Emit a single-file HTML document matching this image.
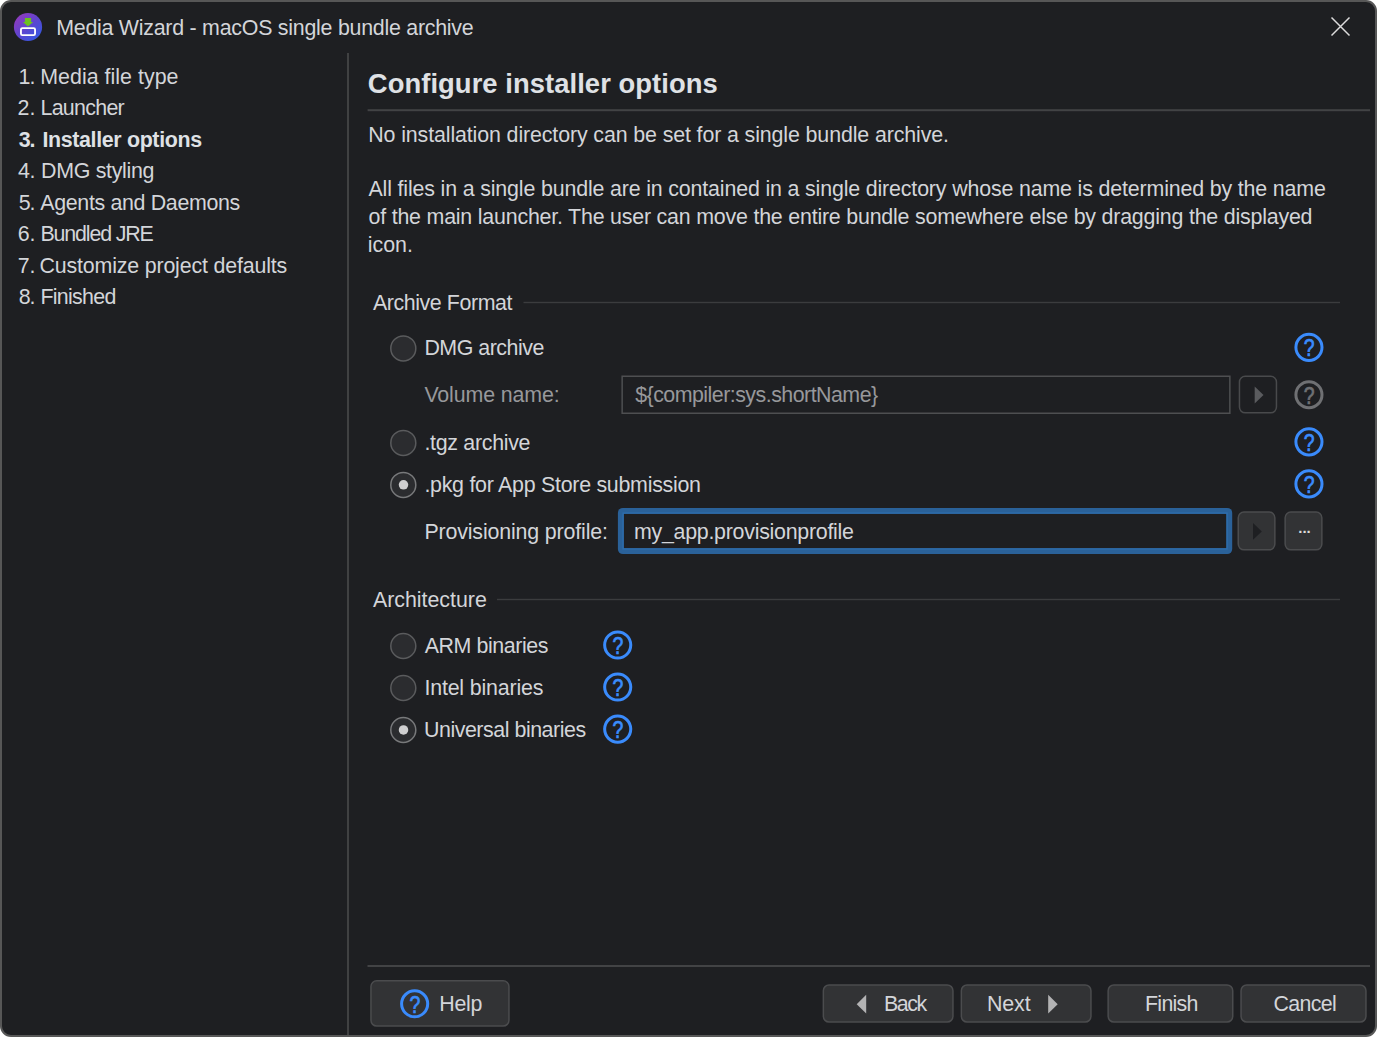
<!DOCTYPE html>
<html lang="en">
<head>
<meta charset="utf-8">
<title>Media Wizard - macOS single bundle archive</title>
<style>
*{box-sizing:border-box;margin:0;padding:0}
html,body{width:1377px;height:1037px;overflow:hidden;background:#fff}
body{font-family:"Liberation Sans",Arial,sans-serif;color:#dfe1e5;position:relative}
#win{position:absolute;left:0;top:0;width:1377px;height:1037px;background:#1e1f22;border:2px solid #575757;border-radius:11px;overflow:hidden}
#abs{position:absolute;left:0;top:0;width:1377px;height:1037px}
#shapes{position:absolute;left:0;top:0}
.q{font-family:"Liberation Sans",Arial,sans-serif;font-size:22.6px;font-weight:400;text-anchor:middle;stroke-width:.7px}
.dots{font-family:"Liberation Sans",Arial,sans-serif;font-size:15px;font-weight:700;text-anchor:middle}
.n{display:inline-block;white-space:pre}
.t{position:absolute;white-space:pre;line-height:28px;color:#d3d5d9;font-weight:400;display:block}
</style>
</head>
<body>
<div id="win"></div>
<div id="abs">
<svg id="shapes" width="1377" height="1037" viewBox="0 0 1377 1037">
<rect x="347" y="53" width="2" height="982" fill="#404142"/>
<rect x="367.6" y="109.2" width="1002.4" height="2" fill="#424345"/>
<rect x="367.5" y="965" width="1002.5" height="2" fill="#424345"/>
<rect x="523.5" y="301.8" width="816.5" height="1.4" fill="#3b3c3e"/>
<rect x="497" y="598.8" width="843" height="1.4" fill="#3b3c3e"/>
<circle cx="403.3" cy="348.4" r="12.5" fill="#2b2c2f" stroke="#5a5b5d" stroke-width="1.5"/>
<circle cx="403.3" cy="442.9" r="12.5" fill="#2b2c2f" stroke="#5a5b5d" stroke-width="1.5"/>
<circle cx="403.3" cy="484.9" r="12.5" fill="#2b2c2f" stroke="#78797b" stroke-width="1.5"/>
<circle cx="403.5" cy="484.8" r="4.75" fill="#cfcfd0"/>
<circle cx="403.3" cy="646" r="12.5" fill="#2b2c2f" stroke="#5a5b5d" stroke-width="1.5"/>
<circle cx="403.3" cy="688" r="12.5" fill="#2b2c2f" stroke="#5a5b5d" stroke-width="1.5"/>
<circle cx="403.3" cy="730" r="12.5" fill="#2b2c2f" stroke="#78797b" stroke-width="1.5"/>
<circle cx="403.5" cy="729.9" r="4.75" fill="#cfcfd0"/>
<rect x="622.15" y="376.25" width="607.70" height="37.00" rx="0.00" fill="#1e1f22" stroke="#4e4f51" stroke-width="1.5"/>
<rect x="617.9" y="507.9" width="614.3" height="46.2" rx="5" fill="#2a6199"/>
<rect x="622.4" y="512.4" width="605.3" height="37.2" fill="#2e6eae"/>
<rect x="623.9" y="513.9" width="602.3" height="34.2" fill="#1e1f22"/>
<rect x="1239.45" y="376.25" width="37.00" height="36.60" rx="5.75" fill="#1e1f22" stroke="#494a4c" stroke-width="1.5"/>
<path d="M1254.7 386.6L1263.5 395L1254.7 403.4z" fill="#5a5b5e"/>
<rect x="1238.25" y="512.05" width="36.60" height="37.80" rx="5.75" fill="#323335" stroke="#4b4c4e" stroke-width="1.5"/>
<path d="M1253 523L1261.8 531.4L1253 539.8z" fill="#1e1f22"/>
<rect x="1285.15" y="512.05" width="36.70" height="37.80" rx="5.75" fill="#323335" stroke="#4b4c4e" stroke-width="1.5"/>
<text class="dots" x="1304.5" y="532.8" fill="#dcdcdc">...</text>
<rect x="370.95" y="980.75" width="138.00" height="45.30" rx="5.75" fill="#323335" stroke="#4b4c4e" stroke-width="1.5"/>
<rect x="823.35" y="984.95" width="129.60" height="37.10" rx="5.75" fill="#323335" stroke="#4b4c4e" stroke-width="1.5"/>
<rect x="961.35" y="984.95" width="129.60" height="37.10" rx="5.75" fill="#323335" stroke="#4b4c4e" stroke-width="1.5"/>
<rect x="1108.15" y="984.95" width="124.60" height="37.10" rx="5.75" fill="#323335" stroke="#4b4c4e" stroke-width="1.5"/>
<rect x="1241.05" y="984.95" width="124.90" height="37.10" rx="5.75" fill="#323335" stroke="#4b4c4e" stroke-width="1.5"/>
<path d="M866.2 994.8L856.7 1004.2L866.2 1013.6z" fill="#b3b3b4"/>
<path d="M1048.2 994.8L1057.7 1004.2L1048.2 1013.6z" fill="#b3b3b4"/>
<circle cx="1308.95" cy="347.35" r="13.05" fill="none" stroke="#3a8bfc" stroke-width="3"/>
<text class="q" transform="translate(1309.25 356.20) scale(0.86 1.07)" fill="#3a8bfc" stroke="#3a8bfc">?</text>
<circle cx="1308.95" cy="394.7" r="13.05" fill="none" stroke="#6f7073" stroke-width="3"/>
<text class="q" transform="translate(1309.25 403.55) scale(0.86 1.07)" fill="#6f7073" stroke="#6f7073">?</text>
<circle cx="1308.95" cy="441.85" r="13.05" fill="none" stroke="#3a8bfc" stroke-width="3"/>
<text class="q" transform="translate(1309.25 450.70) scale(0.86 1.07)" fill="#3a8bfc" stroke="#3a8bfc">?</text>
<circle cx="1308.95" cy="483.9" r="13.05" fill="none" stroke="#3a8bfc" stroke-width="3"/>
<text class="q" transform="translate(1309.25 492.75) scale(0.86 1.07)" fill="#3a8bfc" stroke="#3a8bfc">?</text>
<circle cx="617.7" cy="645" r="13.05" fill="none" stroke="#3a8bfc" stroke-width="3"/>
<text class="q" transform="translate(618.00 653.85) scale(0.86 1.07)" fill="#3a8bfc" stroke="#3a8bfc">?</text>
<circle cx="617.7" cy="687.05" r="13.05" fill="none" stroke="#3a8bfc" stroke-width="3"/>
<text class="q" transform="translate(618.00 695.90) scale(0.86 1.07)" fill="#3a8bfc" stroke="#3a8bfc">?</text>
<circle cx="617.7" cy="729.1" r="13.05" fill="none" stroke="#3a8bfc" stroke-width="3"/>
<text class="q" transform="translate(618.00 737.95) scale(0.86 1.07)" fill="#3a8bfc" stroke="#3a8bfc">?</text>
<circle cx="414.65" cy="1003.8" r="13.05" fill="none" stroke="#3a8bfc" stroke-width="3"/>
<text class="q" transform="translate(414.95 1012.65) scale(0.86 1.07)" fill="#3a8bfc" stroke="#3a8bfc">?</text>
<path d="M1331.5 17.5L1349.5 35.5M1349.5 17.5L1331.5 35.5" stroke="#dcdcdc" stroke-width="1.5" fill="none"/>
<linearGradient id="g1" x1="0.15" y1="0.1" x2="0.85" y2="0.9"><stop offset="0" stop-color="#8f3bbf"/><stop offset="0.5" stop-color="#5e45cf"/><stop offset="1" stop-color="#3557e0"/></linearGradient>
<circle cx="28" cy="27" r="14.1" fill="url(#g1)"/>
<path d="M24.9 18.1H31.1V22H33.1L28 26.5L22.9 22H24.9z" fill="#6cc21e"/>
<rect x="20.95" y="28.1" width="14.1" height="7" rx="1.4" fill="none" stroke="#fff" stroke-width="1.85"/>
</svg>
<span class="t" style="left:56.20px;top:14.00px;font-size:21.4px;letter-spacing:-0.256px;">Media Wizard - macOS single bundle archive</span>
<div class="t" style="left:18.40px;top:63.00px;font-size:21.4px;letter-spacing:0.027px;"><span class="n" style="width:21.80px;letter-spacing:-0.896px">1. </span>Media file type</div>
<div class="t" style="left:17.60px;top:94.00px;font-size:21.4px;letter-spacing:-0.711px;"><span class="n" style="width:22.90px;letter-spacing:-0.096px">2. </span>Launcher</div>
<div class="t" style="left:18.80px;top:126.00px;font-size:21.4px;font-weight:700;color:#dfe1e5;letter-spacing:-0.344px;"><span class="n" style="width:23.60px;letter-spacing:-1.096px">3. </span>Installer options</div>
<div class="t" style="left:17.90px;top:157.00px;font-size:21.4px;letter-spacing:-0.298px;"><span class="n" style="width:23.10px;letter-spacing:-0.396px">4. </span>DMG styling</div>
<div class="t" style="left:18.80px;top:189.00px;font-size:21.4px;letter-spacing:-0.337px;"><span class="n" style="width:21.50px;letter-spacing:-1.296px">5. </span>Agents and Daemons</div>
<div class="t" style="left:17.80px;top:220.00px;font-size:21.4px;letter-spacing:-1.139px;"><span class="n" style="width:22.60px;letter-spacing:-0.296px">6. </span>Bundled JRE</div>
<div class="t" style="left:17.80px;top:252.00px;font-size:21.4px;letter-spacing:-0.174px;"><span class="n" style="width:21.70px;letter-spacing:-0.296px">7. </span>Customize project defaults</div>
<div class="t" style="left:18.80px;top:283.00px;font-size:21.4px;letter-spacing:-0.694px;"><span class="n" style="width:21.60px;letter-spacing:-1.296px">8. </span>Finished</div>
<h1 class="t" style="left:367.80px;top:70.00px;font-size:27.4px;font-weight:700;color:#dfe1e5;letter-spacing:0.056px;">Configure installer options</h1>
<p class="t" style="left:368.30px;top:121.00px;font-size:21.4px;letter-spacing:-0.124px;">No installation directory can be set for a single bundle archive.</p>
<p class="t" style="left:368.50px;top:175.00px;font-size:21.4px;letter-spacing:-0.160px;">All files in a single bundle are in contained in a single directory whose name is determined by the name</p>
<p class="t" style="left:368.50px;top:203.00px;font-size:21.4px;letter-spacing:-0.206px;">of the main launcher. The user can move the entire bundle somewhere else by dragging the displayed</p>
<p class="t" style="left:367.80px;top:231.00px;font-size:21.4px;letter-spacing:-0.010px;">icon.</p>
<span class="t" style="left:373.00px;top:289.00px;font-size:21.4px;letter-spacing:-0.428px;">Archive Format</span>
<label class="t" style="left:424.40px;top:334.00px;font-size:21.4px;letter-spacing:-0.491px;">DMG archive</label>
<label class="t" style="left:424.40px;top:381.00px;font-size:21.4px;color:#97989b;letter-spacing:-0.127px;">Volume name:</label>
<span class="t" style="left:635.20px;top:381.00px;font-size:21.4px;color:#97989b;letter-spacing:-0.527px;">${compiler:sys.shortName}</span>
<label class="t" style="left:424.40px;top:429.00px;font-size:21.4px;letter-spacing:-0.298px;">.tgz archive</label>
<label class="t" style="left:424.40px;top:471.00px;font-size:21.4px;letter-spacing:-0.270px;">.pkg for App Store submission</label>
<label class="t" style="left:424.40px;top:518.00px;font-size:21.4px;letter-spacing:-0.156px;">Provisioning profile:</label>
<span class="t" style="left:633.90px;top:518.00px;font-size:21.4px;letter-spacing:-0.264px;">my_app.provisionprofile</span>
<span class="t" style="left:373.00px;top:586.00px;font-size:21.4px;letter-spacing:-0.030px;">Architecture</span>
<label class="t" style="left:424.70px;top:632.00px;font-size:21.4px;letter-spacing:-0.426px;">ARM binaries</label>
<label class="t" style="left:424.40px;top:674.00px;font-size:21.4px;letter-spacing:-0.176px;">Intel binaries</label>
<label class="t" style="left:424.00px;top:716.00px;font-size:21.4px;letter-spacing:-0.465px;">Universal binaries</label>
<span class="t" style="left:439.20px;top:990.00px;font-size:21.4px;letter-spacing:-0.232px;">Help</span>
<span class="t" style="left:883.90px;top:990.00px;font-size:21.4px;letter-spacing:-1.453px;">Back</span>
<span class="t" style="left:987.00px;top:990.00px;font-size:21.4px;letter-spacing:-0.113px;">Next</span>
<span class="t" style="left:1145.00px;top:990.00px;font-size:21.4px;letter-spacing:-0.713px;">Finish</span>
<span class="t" style="left:1273.40px;top:990.00px;font-size:21.4px;letter-spacing:-0.646px;">Cancel</span>
</div>
</body>
</html>
